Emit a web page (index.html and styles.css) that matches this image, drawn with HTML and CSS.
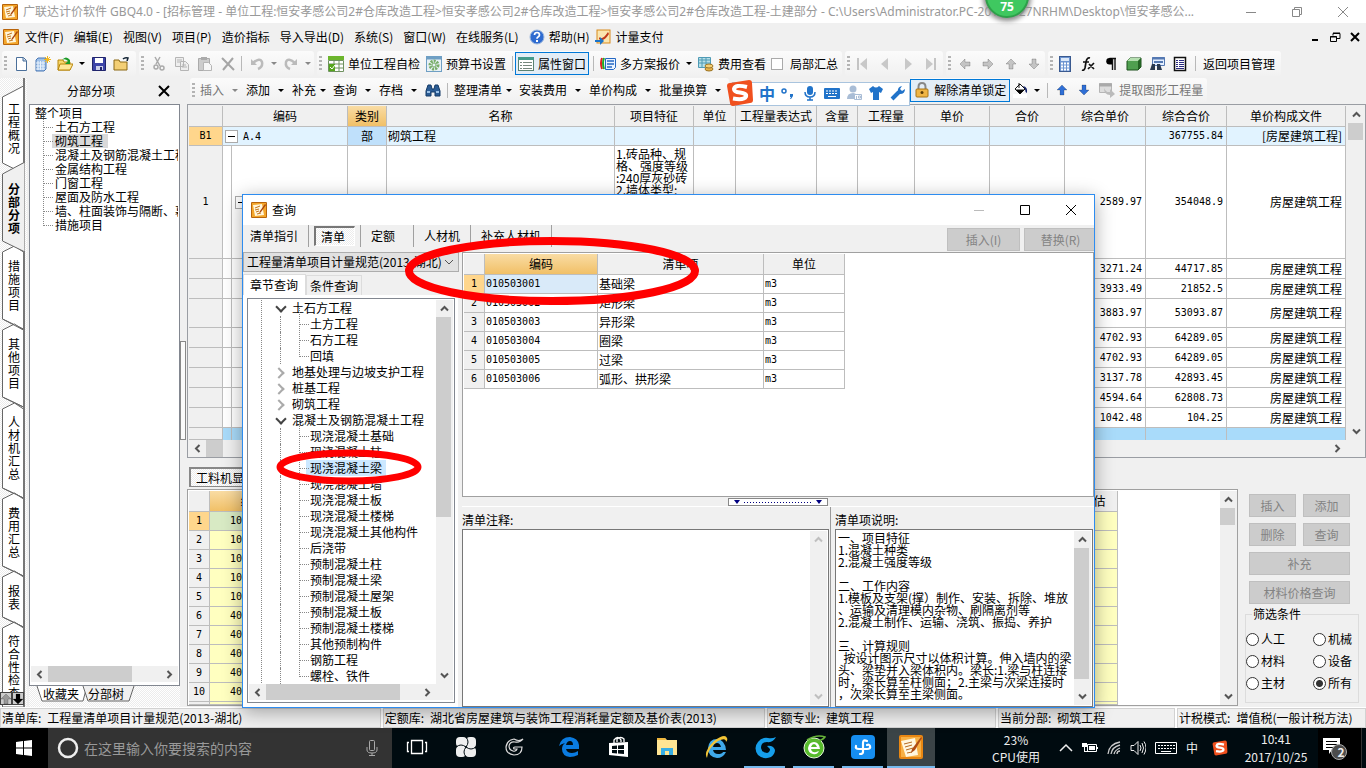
FILE: index.html
```html
<!DOCTYPE html>
<html lang="zh-CN">
<head>
<meta charset="utf-8">
<title>广联达计价软件 GBQ4.0</title>
<link rel="stylesheet" href="styles.css">
</head>
<body>
<svg width="0" height="0" class="defs" aria-hidden="true">
  <symbol id="logo" viewBox="0 0 16 16"><rect width="16" height="16" rx="1" fill="#b8640a"/><rect x="1" y="1" width="14" height="14" fill="#f3a62b"/><path d="M2 3l9-1 2 11-9 1z" fill="#fff6dc"/><path d="M4 6l5-2M4 8l4-1M5 10l3-1M6 12l4-1" stroke="#c2741a" fill="none"/><path d="M14 2L9 9l-1 2 2-1 5-7z" fill="#a8430c"/></symbol>
  <symbol id="up" viewBox="0 0 9 9"><path d="M1 6.500L4.500 3 8 6.500" fill="none" stroke="currentColor" stroke-width="2"/></symbol>
  <symbol id="down" viewBox="0 0 9 9"><path d="M1 2.500L4.500 6 8 2.500" fill="none" stroke="currentColor" stroke-width="2"/></symbol>
  <symbol id="left" viewBox="0 0 9 9"><path d="M6.500 1L3 4.500 6.500 8" fill="none" stroke="currentColor" stroke-width="2"/></symbol>
  <symbol id="right" viewBox="0 0 9 9"><path d="M2.500 1L6 4.500 2.500 8" fill="none" stroke="currentColor" stroke-width="2"/></symbol>
  <symbol id="arrow" viewBox="0 0 16 16"><path d="M8 3l5 5h-3v5H6V8H3z" fill="currentColor" stroke="#0003"/></symbol>
  <symbol id="sogou" viewBox="0 0 28 28"><path d="M4 4L23 1q3 0 3 3l1 17q0 3-3 3L7 27q-3 0-3-3L1 7q0-3 3-3z" fill="#f0501e"/><path d="M21 8q-12-3-13 2 0 3 6 3.500 7 1 6 4-2 4-13 2" fill="none" stroke="#fff" stroke-width="4"/></symbol>
</svg>

<header class="titlebar">
  <svg class="i16"><use href="#logo"/></svg>
  <h1>广联达计价软件 GBQ4.0 - [招标管理 - 单位工程:恒安孝感公司2#仓库改造工程&gt;恒安孝感公司2#仓库改造工程&gt;恒安孝感公司2#仓库改造工程-土建部分 - C:\Users\Administrator.PC-20141127NRHM\Desktop\恒安孝感公...</h1>
  <div class="winbtns">
    <button aria-label="最小化"><svg class="i12" viewBox="0 0 12 12"><path d="M1 6.500h10" stroke="#888"/></svg></button>
    <button aria-label="还原"><svg class="i12" viewBox="0 0 12 12"><path d="M1.500 3.500h7v7h-7zM3.500 3V1.500h7v7H9" fill="none" stroke="#888"/></svg></button>
    <button aria-label="关闭"><svg class="i12" viewBox="0 0 12 12"><path d="M1 1l10 10M11 1L1 11" stroke="#888"/></svg></button>
  </div>
</header>

<nav class="menubar">
  <svg class="i16"><use href="#logo"/></svg>
  <button>文件(F)</button><button>编辑(E)</button><button>视图(V)</button><button>项目(P)</button><button>造价指标</button><button>导入导出(D)</button><button>系统(S)</button><button>窗口(W)</button><button>在线服务(L)</button>
  <button class="ic"><svg class="i16" viewBox="0 0 16 16"><circle cx="8" cy="8" r="7" fill="#2e6bd0" stroke="#9db8dd"/><path d="M5.500 6q0-2.500 2.500-2.500T10.500 6q0 1-1.500 2-1 .6-1 1.700" stroke="#fff" stroke-width="1.700" fill="none"/><rect x="7" y="11" width="2" height="2" fill="#fff"/></svg>帮助(H)</button>
  <button class="ic"><svg class="i16" viewBox="0 0 16 16"><rect x="2" y="1" width="13" height="13" fill="#fbe6b0" stroke="#d88a1c"/><path d="M4 8q3 4 9-5l1 2q-6 9-10 5z" fill="#c03a1c"/><path d="M0 11h5V8l4 4-4 4v-3H0z" fill="#1b74c9"/></svg>计量支付</button>
  <span class="mdi">
    <svg class="i12" viewBox="0 0 12 12"><path d="M3 9h6" stroke="#000" stroke-width="2"/></svg>
    <svg class="i12" viewBox="0 0 12 12"><path d="M1.500 5.500h6v5h-6zM4 4.500V2.500h7v5H8M1 6h7M4 2h7" fill="none" stroke="#000"/></svg>
    <svg class="i12" viewBox="0 0 12 12"><path d="M2 2l8 8M10 2l-8 8" stroke="#000" stroke-width="2"/></svg>
  </span>
</nav>

<div class="toolbar">
  <div class="group g1">
    <i class="grip"></i>
    <button aria-label="新建"><svg class="i16" viewBox="0 0 16 16"><path d="M3.500 1.500h7l3 3v10h-10z" fill="#fff" stroke="#4a6f9a"/><path d="M10 2v3h3" fill="#bcd0e6" stroke="#4a6f9a"/></svg></button>
    <button aria-label="新建项目"><svg class="i16" viewBox="0 0 16 16"><path d="M1 4l2-2h8v11l-2 2H1z" fill="#9ec0e8" stroke="#4b78b5"/><path d="M3 5v9M5.500 5v9M8 5v9M1 7h9M1 10h9M1 13h9" stroke="#e9f2fb"/><path d="M12.500 0v7M9 3.500h7M10 1l5 5M15 1l-5 5" stroke="#f3b81d"/></svg></button>
    <button aria-label="打开"><svg class="i16" viewBox="0 0 16 16"><path d="M1 4h5l1 2h6v8H1z" fill="#f7d66c" stroke="#b8860b"/><path d="M3 8h13l-3 6H1z" fill="#ffe799" stroke="#b8860b"/><path d="M5 4q4-5 8 0V1v7H8l3-3q-3-3-6-1z" fill="#1c9b29"/></svg></button>
    <b class="dd"></b>
    <button aria-label="保存"><svg class="i16" viewBox="0 0 16 16"><path d="M1.500 1.500h13v13h-13z" fill="#3d45a8" stroke="#20246c"/><rect x="4" y="2" width="8" height="5" fill="#fff"/><rect x="5" y="10" width="7" height="4" fill="#cdd1ea"/><rect x="9" y="11" width="2" height="3" fill="#20246c"/></svg></button>
    <button aria-label="文件夹"><svg class="i16" viewBox="0 0 16 16"><path d="M1 4h5l1 2h7v8H1z" fill="#f3cf75" stroke="#8b6914"/><path d="M10 3q2-2 5-1l-1 3" stroke="#123" fill="none" stroke-width="1.500"/></svg></button>
  </div>
  <div class="group g2">
    <i class="grip"></i>
    <button aria-label="剪切" disabled><svg class="i16" viewBox="0 0 16 16"><path d="M4 1l5 9M9 1L5 8" stroke="#aaa" stroke-width="1.500"/><circle cx="5" cy="11" r="2" fill="none" stroke="#aaa" stroke-width="1.500"/><circle cx="11" cy="12" r="2" fill="none" stroke="#aaa" stroke-width="1.500"/></svg></button>
    <button aria-label="复制" disabled><svg class="i16" viewBox="0 0 16 16"><path d="M1.500 1.500h8v9h-8zM6.500 5.500h5l3 3v6h-8z" fill="#eee" stroke="#b5b5b5"/><path d="M8 9h4M8 11h5M3 4h5M3 6h3" stroke="#b5b5b5"/></svg></button>
    <button aria-label="粘贴" disabled><svg class="i16" viewBox="0 0 16 16"><path d="M1.500 2.500h11v12h-11z" fill="#ccc" stroke="#aaa"/><path d="M4 1h6v3H4z" fill="#aaa"/><path d="M6.500 6.500h5l3 3v5h-8z" fill="#f6f6f6" stroke="#b5b5b5"/></svg></button>
    <button aria-label="删除" disabled><svg class="i16" viewBox="0 0 16 16"><path d="M2 2l12 12M13 2L3 14" stroke="#a5a5a5" stroke-width="2"/></svg></button>
    <i class="sep"></i>
    <button aria-label="撤销" disabled><svg class="i16" viewBox="0 0 16 16"><path d="M4 7q7-6 9-1 1 5-4 7" stroke="#bbb" stroke-width="2.500" fill="none"/><path d="M2 3v6h6z" fill="#bbb"/></svg></button>
    <b class="dd off"></b>
    <button aria-label="重做" disabled><svg class="i16" viewBox="0 0 16 16"><path d="M12 7q-7-6-9-1-1 5 4 7" stroke="#bbb" stroke-width="2.500" fill="none"/><path d="M14 3v6H8z" fill="#bbb"/></svg></button>
    <b class="dd off"></b>
  </div>
  <div class="group g3">
    <i class="grip"></i>
    <button><svg class="i16" viewBox="0 0 16 16"><rect width="16" height="4" fill="#6cb52d"/><path d="M.5 4.500h15v11H.5zM0 8h16M0 12h16M6 4v12M11 4v12" fill="#fff" stroke="#6f9160"/><rect x="1" y="8" width="6" height="7" fill="#55a51c"/><path d="M2 11l2 2 3-4" stroke="#fff" fill="none"/></svg>单位工程自检</button>
    <button><svg class="i16" viewBox="0 0 16 16"><rect x=".5" y=".5" width="15" height="15" fill="#e8f1f6" stroke="#6f9fc4"/><path d="M0 2h16" stroke="#6f9fc4" stroke-width="3"/><circle cx="8" cy="9" r="4" fill="none" stroke="#78ad68" stroke-width="3" stroke-dasharray="2 1"/><circle cx="8" cy="9" r="2" fill="none" stroke="#78ad68"/></svg>预算书设置</button>
    <i class="sep"></i>
    <button class="pressed"><svg class="i16" viewBox="0 0 16 16"><rect x=".5" y="1.500" width="15" height="13" fill="#fff" stroke="#5a8272"/><rect y="1" width="16" height="3" fill="#459a8a"/><path d="M5 6.500h9M5 9.500h9M5 12.500h9M2 6.500h2M2 9.500h2M2 12.500h2" stroke="#75877d"/></svg>属性窗口</button>
    <i class="sep"></i>
    <button><svg class="i16" viewBox="0 0 16 16"><path d="M2 2q-2 5 0 11" stroke="#d22" stroke-width="2" fill="none"/><path d="M4 2q-2 5 0 11" stroke="#2a2" stroke-width="2" fill="none"/><path d="M5.500 2.500h10v9l-2 2h-8z" fill="#eaf3ff" stroke="#2468c4"/><path d="M7 5h7M7 8h7M7 11h5" stroke="#2468c4" stroke-width="1.500"/></svg>多方案报价</button>
    <b class="dd"></b>
    <button><svg class="i16" viewBox="0 0 16 16"><path d="M.5 1.500h12v10H.5zM0 4h13M0 7h13M4 1v10M8 1v10" fill="#b7e0e8" stroke="#4e9ab5"/><ellipse cx="11" cy="13" rx="4" ry="2" fill="#e6b24a" stroke="#9c7425"/><ellipse cx="11" cy="10" rx="4" ry="2" fill="#f3cf75" stroke="#9c7425"/></svg>费用查看</button>
    <label><input type="checkbox" class="check">局部汇总</label>
  </div>
  <div class="group nav4">
    <i class="grip"></i>
    <button aria-label="首条" disabled><svg class="i16" viewBox="0 0 16 16"><path d="M4 2v12" stroke="#c4c4c4" stroke-width="2"/><path d="M13 2v12L6 8z" fill="#c8c8c8"/></svg></button>
    <button aria-label="上一条" disabled><svg class="i16" viewBox="0 0 16 16"><path d="M11 2v12L4 8z" fill="#c8c8c8"/></svg></button>
    <button aria-label="下一条" disabled><svg class="i16" viewBox="0 0 16 16"><path d="M5 2v12l7-6z" fill="#c8c8c8"/></svg></button>
    <button aria-label="末条" disabled><svg class="i16" viewBox="0 0 16 16"><path d="M12 2v12" stroke="#c4c4c4" stroke-width="2"/><path d="M3 2v12l7-6z" fill="#c8c8c8"/></svg></button>
  </div>
  <div class="group nav5">
    <i class="grip"></i>
    <button aria-label="左移" disabled><svg class="i16 r270"><use href="#arrow"/></svg></button>
    <button aria-label="右移" disabled><svg class="i16 r90"><use href="#arrow"/></svg></button>
    <button aria-label="上移" disabled><svg class="i16"><use href="#arrow"/></svg></button>
    <button aria-label="下移" disabled><svg class="i16 r180"><use href="#arrow"/></svg></button>
  </div>
  <div class="group g6">
    <i class="grip"></i>
    <button aria-label="计算器"><svg class="i16" viewBox="0 0 16 16"><rect x="2.500" y=".5" width="11" height="15" fill="#6d94d0" stroke="#39598f"/><rect x="4" y="2" width="8" height="3" fill="#dbe8f8"/><path d="M4 7.500h8M4 10.500h8M4 13.500h8" stroke="#fff" stroke-width="2" stroke-dasharray="2 1"/></svg></button>
    <button aria-label="函数"><svg class="i16" viewBox="0 0 16 16"><path d="M10 2q-3-1-4 4L5 12q-1 3-3 2M3 6h6M9 8l5 5M14 7l-6 6" stroke="#111" stroke-width="1.700" fill="none"/></svg></button>
    <button aria-label="段落"><svg class="i16" viewBox="0 0 16 16"><path d="M13 2.500H6.500M9.500 2v12M12 2v12" fill="none" stroke="#111" stroke-width="1.400"/><path d="M9 2H6.500a3 3 0 000 6.500H9z"/></svg></button>
    <button aria-label="模型"><svg class="i16" viewBox="0 0 16 16"><path d="M1 5l3-3h11v9l-3 3H1z" fill="#4f9f4f" stroke="#1d501d"/><path d="M1 5l3-3h11l-3 3z" fill="#b5dfb0"/><path d="M12 5v9l3-3V2z" fill="#246324"/></svg></button>
    <button aria-label="查找清单"><svg class="i16" viewBox="0 0 16 16"><path d="M3.500 1.500h12v8h-12z" fill="#e4efff" stroke="#5579b2"/><path d="M3 2.500h13M5 6h9" stroke="#5579b2" stroke-width="2"/><path d="M1 14l2-6h3v6zM8 14V8h3l2 6z" fill="#29394f"/></svg></button>
    <button aria-label="报表"><svg class="i16" viewBox="0 0 16 16"><path d="M2.500 1.500h11v13h-11z" fill="#fff" stroke="#111" stroke-width="1.500"/><path d="M4 4.500h2M7 4.500h5M4 6.500h2M7 6.500h5M4 8.500h2M7 8.500h5M4 10.500h2M7 10.500h5M4 12.500h8" stroke="#2b2b80"/></svg></button>
    <i class="sep"></i>
    <button class="plain">返回项目管理</button>
  </div>
</div>

<div class="workspace">
  <nav class="vtabs">
    <svg class="vshape" viewBox="0 0 25 629" width="25" height="629" aria-hidden="true">
      <g fill="#fff" stroke="#666"><path d="M23.500 8L2.500 19v66l12 6 9-6z"/><path d="M2.500 241V174l12-6 9 6v77z"/><path d="M2.500 319V252l12-6 9 6v77z"/><path d="M2.500 410V331l12-6 9 6v89z"/><path d="M2.500 488V421l12-6 9 6v77z"/><path d="M2.500 539V499l12-6 9 6v50z"/><path d="M2.500 629V550l12-6 9 6v79z"/><path d="M2.500 241l21 11M2.500 319l21 10M2.500 410l21 10M2.500 488l21 10M2.500 539l21 10"/></g>
      <path d="M25 84L2.500 96v67L25 174z" fill="#f0f0f0" stroke="#666"/><path d="M24 0v85M24 174v455" stroke="#777" stroke-width="2"/>
    </svg>
    <button class="t1">工程概况</button><button class="t2 on">分部分项</button><button class="t3">措施项目</button><button class="t3">其他项目</button><button class="t5">人材机汇总</button><button class="t3">费用汇总</button><button class="t7">报表</button><button class="t8">符合性检查</button>
    <span class="vscroll"><button aria-label="上"><svg class="i12 gray" viewBox="2 2 12 12"><use href="#arrow" width="16" height="16"/></svg></button><button aria-label="下"><svg class="i12 r180" viewBox="2 2 12 12"><use href="#arrow" width="16" height="16"/></svg></button></span>
  </nav>

  <aside class="side">
    <div class="sidehead"><h2>分部分项</h2><button aria-label="关闭"><svg class="i12" viewBox="0 0 12 12"><path d="M1 1l10 10M11 1L1 11" stroke="#000" stroke-width="2"/></svg></button></div>
    <div class="treebox">
      <ul class="tree">
        <li class="root">整个项目</li>
        <li><span>土石方工程</span></li><li><span class="sel">砌筑工程</span></li><li><span>混凝土及钢筋混凝土工程</span></li><li><span>金属结构工程</span></li><li><span>门窗工程</span></li><li><span>屋面及防水工程</span></li><li><span>墙、柱面装饰与隔断、幕墙工程</span></li><li><span>措施项目</span></li>
      </ul>
      <div class="sbh"><svg class="i9"><use href="#left"/></svg><div class="track"><i class="th84"></i></div><svg class="i9"><use href="#right"/></svg></div>
    </div>
    <div class="sidetabs">
      <svg viewBox="0 0 104 17" width="104" height="17" aria-hidden="true"><path d="M1 0l5 15h41l4-15" fill="#fff" stroke="#666"/><path d="M47 0l5 15h41l5-15" fill="#f0f0f0" stroke="#666"/></svg>
      <button>收藏夹</button><button>分部树</button>
    </div>
  </aside>
  <div class="split"><i></i></div>

  <main class="main">
    <div class="toolbar second">
      <div class="group">
        <i class="grip"></i>
        <button class="dim">插入</button><b class="dd off wide"></b><button>添加</button><b class="dd wide"></b><button>补充</button><b class="dd slim"></b><button>查询</button><b class="dd wide"></b><button>存档</button><b class="dd wide"></b>
        <button aria-label="查找"><svg class="i16" viewBox="0 0 16 16"><path d="M1 14V9l2-6h3l1 4h2l1-4h3l2 6v5h-5v-4H6v4z" fill="#2b5c94" stroke="#153a66"/><path d="M2 10h3M11 10h3" stroke="#9cc2e8" stroke-width="2"/></svg></button>
        <i class="sep"></i>
        <button>整理清单</button><b class="dd slim"></b><button>安装费用</button><b class="dd wide"></b><button>单价构成</button><b class="dd wide"></b><button>批量换算</button><b class="dd wide"></b>
      </div>
      <div class="group after">
        <button class="pressed"><svg class="i16" viewBox="0 0 16 16"><path d="M4.500 8V5q0-4 3.500-4t3.500 4v3" fill="none" stroke="#888" stroke-width="2"/><rect x="2" y="7" width="12" height="8" rx="1" fill="#efb545" stroke="#a87416"/><circle cx="8" cy="10.500" r="1.500" fill="#5a3c08"/></svg>解除清单锁定</button>
        <button aria-label="填充"><svg class="i16" viewBox="0 0 16 16"><rect y="12" width="14" height="4" fill="#fff"/><path d="M2 7l5-5 5 5-5 5z" fill="#fff" stroke="#111"/><path d="M3 8h8l-4 4zM6 1v5" stroke="#111"/><path d="M10 4q5 1 4 7-2-1-2-4z" fill="#14246c"/></svg></button>
        <b class="dd"></b><i class="sep"></i>
        <button aria-label="上移" class="blue"><svg class="i16"><use href="#arrow"/></svg></button>
        <button aria-label="下移" class="blue"><svg class="i16 r180"><use href="#arrow"/></svg></button>
        <button class="dim"><svg class="i16" viewBox="0 0 16 16"><path d="M.5 1.500h12v9H.5z" fill="#ddd" stroke="#b5b5b5"/><path d="M0 3h13" stroke="#aaa" stroke-width="3"/><path d="M5 6q2 5 6 4V7l5 5-5 4v-3Q5 13 5 6z" fill="#bbb"/></svg>提取图形工程量</button>
      </div>
    </div>

    <div class="gridbox top">
      <table class="grid">
        <colgroup><col class="c34"><col class="c125"><col class="c39"><col><col class="c79"><col class="c42"><col class="c81"><col class="c41"><col class="c57"><col class="c75"><col class="c75"><col class="c81"><col class="c81"><col class="c119"></colgroup>
        <thead><tr class="h21"><th></th><th>编码</th><th class="hot">类别</th><th>名称</th><th>项目特征</th><th>单位</th><th>工程量表达式</th><th>含量</th><th>工程量</th><th>单价</th><th>合价</th><th>综合单价</th><th>综合合价</th><th>单价构成文件</th></tr></thead>
        <tbody>
          <tr class="h19 sec"><th class="act">B1</th><td class="n"><i class="box"></i>A.4</td><td class="kind">部</td><td>砌筑工程</td><td></td><td></td><td></td><td></td><td></td><td></td><td></td><td></td><td class="n r">367755.84</td><td class="r">[房屋建筑工程]</td></tr>
          <tr class="h113"><th class="n">1</th><td class="tl"><i class="box in"></i></td><td></td><td></td><td class="wrap">1.砖品种、规<br>格、强度等级<br>:240厚灰砂砖<br>2.墙体类型:</td><td></td><td></td><td></td><td></td><td></td><td></td><td class="n r">2589.97</td><td class="n r">354048.9</td><td class="r">房屋建筑工程</td></tr>
          <tr class="h20"><th></th><td class="tl"></td><td></td><td></td><td></td><td></td><td></td><td></td><td></td><td></td><td></td><td class="n r">3271.24</td><td class="n r">44717.85</td><td class="r">房屋建筑工程</td></tr>
          <tr class="h20"><th></th><td class="tl"></td><td></td><td></td><td></td><td></td><td></td><td></td><td></td><td></td><td></td><td class="n r">3933.49</td><td class="n r">21852.5</td><td class="r">房屋建筑工程</td></tr>
          <tr class="h29"><th></th><td class="tl"></td><td></td><td></td><td></td><td></td><td></td><td></td><td></td><td></td><td></td><td class="n r">3883.97</td><td class="n r">53093.87</td><td class="r">房屋建筑工程</td></tr>
          <tr class="h20"><th></th><td class="tl"></td><td></td><td></td><td></td><td></td><td></td><td></td><td></td><td></td><td></td><td class="n r">4702.93</td><td class="n r">64289.05</td><td class="r">房屋建筑工程</td></tr>
          <tr class="h20"><th></th><td class="tl"></td><td></td><td></td><td></td><td></td><td></td><td></td><td></td><td></td><td></td><td class="n r">4702.93</td><td class="n r">64289.05</td><td class="r">房屋建筑工程</td></tr>
          <tr class="h20"><th></th><td class="tl"></td><td></td><td></td><td></td><td></td><td></td><td></td><td></td><td></td><td></td><td class="n r">3137.78</td><td class="n r">42893.45</td><td class="r">房屋建筑工程</td></tr>
          <tr class="h20"><th></th><td class="tl"></td><td></td><td></td><td></td><td></td><td></td><td></td><td></td><td></td><td></td><td class="n r">4594.64</td><td class="n r">62808.73</td><td class="r">房屋建筑工程</td></tr>
          <tr class="h20"><th></th><td class="tl"></td><td></td><td></td><td></td><td></td><td></td><td></td><td></td><td></td><td></td><td class="n r">1042.48</td><td class="n r">104.25</td><td class="r">房屋建筑工程</td></tr>
          <tr class="h12 cur"><th></th><td class="tl"></td><td></td><td></td><td></td><td></td><td></td><td></td><td></td><td></td><td></td><td></td><td></td><td></td></tr>
        </tbody>
      </table>
      <div class="sbv"><svg class="i9"><use href="#up"/></svg><div class="track"><i class="th17"></i></div><svg class="i9"><use href="#down"/></svg></div>
      <div class="sbh"><svg class="i9"><use href="#left"/></svg><div class="track"><i class="th17w"></i></div><svg class="i9"><use href="#right"/></svg></div>
    </div>

    <div class="subtabs"><button>工料机显示</button></div>

    <div class="lower">
      <div class="gridbox bottom">
        <table class="grid yel">
          <colgroup><col class="c20"><col class="c86"><col><col class="c72"></colgroup>
          <thead><tr class="h21"><th></th><th class="hot">编码</th><th></th><th>是否暂估</th></tr></thead>
          <tbody class="n">
            <tr class="h19"><th class="act">1</th><td class="grn">10</td><td></td><td></td></tr>
            <tr class="h19"><th>2</th><td>10</td><td></td><td></td></tr><tr class="h19"><th>3</th><td>10</td><td></td><td></td></tr><tr class="h19"><th>4</th><td>10</td><td></td><td></td></tr><tr class="h19"><th>5</th><td>10</td><td></td><td></td></tr><tr class="h19"><th>6</th><td>40</td><td></td><td></td></tr><tr class="h19"><th>7</th><td>40</td><td></td><td></td></tr><tr class="h19"><th>8</th><td>40</td><td></td><td></td></tr><tr class="h19"><th>9</th><td>40</td><td></td><td></td></tr><tr class="h19"><th>10</th><td>40</td><td></td><td></td></tr><tr class="h2"><th></th><td></td><td></td><td></td></tr>
          </tbody>
        </table>
        <div class="blank"></div>
        <div class="sbv"><svg class="i9"><use href="#up"/></svg><div class="track"><i class="th17"></i></div><svg class="i9"><use href="#down"/></svg></div>
      </div>
      <section class="actions">
        <div class="btns"><button disabled>插入</button><button disabled>添加</button><button disabled>删除</button><button disabled>查询</button><button disabled class="full">补充</button><button disabled class="full">材料价格查询</button></div>
        <fieldset><legend>筛选条件</legend>
          <label><input type="radio" name="f">人工</label><label><input type="radio" name="f">机械</label>
          <label><input type="radio" name="f">材料</label><label><input type="radio" name="f">设备</label>
          <label><input type="radio" name="f">主材</label><label><input type="radio" name="f" checked>所有</label>
        </fieldset>
      </section>
    </div>
  </main>
</div>

<footer class="status"><span class="s1">清单库:&ensp;工程量清单项目计量规范(2013-湖北)</span><span class="s2">定额库:&ensp;湖北省房屋建筑与装饰工程消耗量定额及基价表(2013)</span><span class="s3">定额专业:&ensp;建筑工程</span><span class="s4">当前分部:&ensp;砌筑工程</span><span class="s5">计税模式:&ensp;增值税(一般计税方法)</span></footer>

<div class="taskbar">
  <button class="start" aria-label="开始"><svg class="i16" viewBox="0 0 16 16"><path d="M0 2l7-1v6.500H0zM8 1l8-1v7.500H8zM0 8.500h7V15l-7-1zM8 8.500h8V16l-8-1z" fill="#fff"/></svg></button>
  <label class="search"><svg class="i22" viewBox="0 0 22 22"><circle cx="11" cy="11" r="9" fill="none" stroke="#eee" stroke-width="2.500"/></svg><input type="text" placeholder="在这里输入你要搜索的内容" aria-label="搜索"><svg class="i16" viewBox="0 0 16 16"><rect x="5.500" y=".5" width="5" height="10" rx="1" fill="none" stroke="#aaa"/><path d="M3 7v3q0 3 5 3t5-3V7M8 13v3M5 15.500h6" fill="none" stroke="#aaa"/></svg></label>
  <div class="apps">
    <button aria-label="任务视图"><svg class="i22" viewBox="0 0 22 22"><path d="M5.500 4.500h11v13h-11zM3 6.500H1.500v9H3M19 6.500h1.500v9H19" fill="none" stroke="#fff" stroke-width="1.300"/></svg></button>
    <button aria-label="应用"><svg class="i22" viewBox="0 0 22 22"><g fill="#eee"><rect x="1" y="1" width="11" height="10" rx="4"/><rect x="11" y="1" width="10" height="11" rx="4"/><rect x="10" y="11" width="11" height="10" rx="4"/><rect x="1" y="10" width="10" height="11" rx="4"/></g><path d="M11 11Q6 7 1 11M11 11q4-5 0-10M11 11q5 4 10 0M11 11q-4 5 0 10" stroke="#000b10" fill="none"/></svg></button>
    <button aria-label="浏览器"><svg class="i22" viewBox="0 0 22 22"><path d="M19 3q-4 3-9 0-7 1-8 8 0 7 8 8 8 0 8-8h-7q-2 0-1 2h3q-1 3-4 2-4-1-4-5 1-5 6-4 5 1 8-3z" fill="none" stroke="#ddd" stroke-width="1.200"/></svg></button>
    <button class="edge" aria-label="Edge"><svg class="i22" viewBox="0 0 22 22"><path d="M1 10Q3 1 12 1q8 1 9 8v4H8q1 4 6 4 3 0 6-2v4q-4 2-8 2-8-1-8-8 0-4 3-6-4 1-6 3zm7-1h7q0-4-3-4t-4 4z" fill="#0a7be0"/></svg></button>
    <button aria-label="商店"><svg class="i22" viewBox="0 0 22 22"><path d="M2 7l19-1v15L2 19z" fill="#fff"/><path d="M7 7V4q4-5 7 0v2M10 6V3q4-3 7 0v3" stroke="#fff" fill="none" stroke-width="1.300"/><path d="M5 10l5-.5v3.500H5zM11 9.500l6-.5v4h-6zM5 14h5v3.500L5 17zM11 14h6v4l-6-.5z" fill="#000b10"/></svg></button>
    <button aria-label="资源管理器"><svg class="i22" viewBox="0 0 22 22"><path d="M1 2h8l2 2h10v15H1z" fill="#ffe594"/><path d="M1 2h8l1 2H1z" fill="#efb73e"/><path d="M5 19v-7h12v7h-4v-4H9v4z" fill="#37aee5"/></svg></button>
    <button aria-label="IE"><svg class="i24" viewBox="0 0 24 24"><path d="M4 13Q5 4 13 4q8 1 9 11H9q1 4 5 4 4 0 5-2h3q-3 6-9 6-9-1-9-10zm5-1h8q-1-4-4-4t-4 4z" fill="#3fa9ea"/><path d="M3 23Q-1 17 10 6 21-2 23 3q1 2-1 4 0-5-8-1Q4 13 3 23z" fill="#f2c436"/></svg></button>
    <button class="run" aria-label="浏览器"><svg class="i24" viewBox="0 0 24 24"><path d="M23 2q-3 6-9 5-6 0-6 6 1 5 6 5 3-1 3-4l-3-3q6-1 8 4 0 4-4 7-7 3-13-2-5-7 0-13 4-5 10-4 4 1 8-1z" fill="#159eea"/></svg></button>
    <button class="run" aria-label="安全浏览器"><svg class="i24" viewBox="0 0 24 24"><circle cx="12" cy="13" r="10" fill="#57bb2c" stroke="#e5f7d8"/><path d="M6 13q1-6 6-6t6 7H9q1 4 5 3l3-1q-2 4-6 3-5-1-5-6zm3-1h6q-1-3-3-3t-3 3z" fill="#fff"/><path d="M5 5q10-6 18-3-3 4-10 4" fill="none" stroke="#66b33a" stroke-width="1.500"/></svg></button>
    <button class="run" aria-label="云盘"><svg class="i24" viewBox="0 0 24 24"><rect width="24" height="24" rx="4" fill="#168ef0"/><path d="M16 6q-4-2-4 2v9q0 2-3 2M5 11q-1 3 3 3h8q4 0 3-3-1-2-3-1" stroke="#fff" stroke-width="2.200" fill="none" stroke-linecap="round"/></svg></button>
    <button class="run on" aria-label="广联达"><svg class="i24" viewBox="0 0 24 24"><rect width="24" height="24" rx="2" fill="#e98712"/><rect x="2" y="2" width="20" height="20" fill="#f7b044"/><path d="M2 6l14-3 3 17-12 2z" fill="#fff7df"/><path d="M5 9l8-2M6 12l7-2M7 15l7-2M8 18l5-1" stroke="#b66b22"/><path d="M22 2l-9 12-1 4 4-3 7-12z" fill="#b04c12"/></svg></button>
  </div>
  <div class="cpu">23%<br>CPU使用</div>
  <div class="tray">
    <svg class="i16" viewBox="0 0 16 16"><path d="M2 11l6-6 6 6" fill="none" stroke="#eee" stroke-width="1.500"/></svg>
    <svg class="i16" viewBox="0 0 16 16"><path d="M5.500 4.500h9v7h-9z" fill="none" stroke="#fff"/><path d="M7 6h6v4H7zM15 7h1v2h-1zM0 3h5v4H0zM2 7h1v4h3v1H2z" fill="#fff"/></svg>
    <svg class="i16" viewBox="0 0 16 16"><path d="M2 14Q3 4 14 2M5 14q1-7 9-9M8 14q1-4 6-6M11 14q0-3 3-3" fill="none" stroke="#ccc" stroke-width="1.300"/></svg>
    <svg class="i16" viewBox="0 0 16 16"><path d="M1 5.500h3l4-4v13l-4-4H1zM10 5q2 3 0 6M12 3q3 5 0 10M14 1.500q4 6 0 13" fill="none" stroke="#eee"/></svg>
    <svg class="i24" viewBox="0 0 24 24"><path d="M1.500 6.500h21v11h-21z" fill="none" stroke="#fff"/><path d="M4 9.500h17M4 12.500h17" stroke="#fff" stroke-dasharray="2 1"/><path d="M7 15.500h10" stroke="#fff"/></svg>
    <span>中</span>
    <svg class="i16"><use href="#sogou"/></svg>
  </div>
  <div class="clock">10:41<br>2017/10/25</div>
  <button class="note" aria-label="通知"><svg class="i24" viewBox="0 0 24 24"><path d="M0 2h17v12H9l-3 4v-4H0z" fill="#fff"/><path d="M3 5.500h11M3 8.500h11M3 11.500h7" stroke="#000"/><circle cx="16" cy="16" r="7.500" fill="#4c4c4c" stroke="#aaa"/></svg><b>2</b></button>
</div>

<section class="dialog" role="dialog" aria-label="查询">
  <div class="dtitle"><svg class="i16"><use href="#logo"/></svg><h2>查询</h2>
    <button aria-label="最小化"><svg class="i12" viewBox="0 0 12 12"><path d="M1 6.500h10" stroke="#bbb"/></svg></button>
    <button aria-label="最大化"><svg class="i12" viewBox="0 0 12 12"><path d="M1.500 1.500h9v9h-9z" fill="none" stroke="#000"/></svg></button>
    <button aria-label="关闭"><svg class="i12" viewBox="0 0 12 12"><path d="M1 1l10 10M11 1L1 11" stroke="#000"/></svg></button>
  </div>
  <div class="dtabs"><button>清单指引</button><button class="on">清单</button><button class="w">定额</button><button>人材机</button><button>补充人材机</button><span class="dact"><button disabled>插入(I)</button><button disabled>替换(R)</button></span></div>
  <div class="dbody">
    <div class="dleft">
      <div class="combo"><select aria-label="清单规范"><option>工程量清单项目计量规范(2013-湖北)</option></select><svg class="i12" viewBox="0 0 12 12"><path d="M2 4l4 4 4-4" fill="none" stroke="#555"/></svg></div>
      <div class="ptabs"><button class="on">章节查询</button><button>条件查询</button></div>
      <div class="page"><div class="dtree">
        <ul class="nodes">
          <li class="p open">土石方工程</li><li>土方工程</li><li>石方工程</li><li class="last">回填</li>
          <li class="p">地基处理与边坡支护工程</li><li class="p">桩基工程</li><li class="p">砌筑工程</li>
          <li class="p open">混凝土及钢筋混凝土工程</li><li>现浇混凝土基础</li><li>现浇混凝土柱</li><li><mark>现浇混凝土梁</mark></li><li>现浇混凝土墙</li><li>现浇混凝土板</li><li>现浇混凝土楼梯</li><li>现浇混凝土其他构件</li><li>后浇带</li><li>预制混凝土柱</li><li>预制混凝土梁</li><li>预制混凝土屋架</li><li>预制混凝土板</li><li>预制混凝土楼梯</li><li>其他预制构件</li><li>钢筋工程</li><li class="last">螺栓、铁件</li>
        </ul>
        <div class="sbv"><svg class="i9"><use href="#up"/></svg><div class="track"><i class="th200"></i></div><svg class="i9"><use href="#down"/></svg></div>
        <div class="sbh"><svg class="i9"><use href="#left"/></svg><div class="track"><i class="th134"></i></div><svg class="i9"><use href="#right"/></svg></div>
      </div></div>
    </div>
    <div class="dright">
      <div class="dgrid">
        <table class="grid small">
          <colgroup><col class="c21"><col class="c113"><col class="c166"><col class="c81"></colgroup>
          <thead><tr class="h21"><th></th><th class="hot">编码</th><th>清单项</th><th>单位</th></tr></thead>
          <tbody>
            <tr class="h19"><th class="act n">1</th><td class="n pick">010503001</td><td>基础梁</td><td class="n">m3</td></tr>
            <tr class="h19"><th class="n">2</th><td class="n">010503002</td><td>矩形梁</td><td class="n">m3</td></tr>
            <tr class="h19"><th class="n">3</th><td class="n">010503003</td><td>异形梁</td><td class="n">m3</td></tr>
            <tr class="h19"><th class="n">4</th><td class="n">010503004</td><td>圈梁</td><td class="n">m3</td></tr>
            <tr class="h19"><th class="n">5</th><td class="n">010503005</td><td>过梁</td><td class="n">m3</td></tr>
            <tr class="h19"><th class="n">6</th><td class="n">010503006</td><td>弧形、拱形梁</td><td class="n">m3</td></tr>
          </tbody>
        </table>
      </div>
      <div class="hsplit"><span><svg viewBox="0 0 98 6" width="98" height="6"><path d="M5 1h6L8 5zM87 1h6l-3 4z" fill="#000080"/><path d="M15 3.500h68" stroke="#000080" stroke-dasharray="1 2"/></svg></span></div>
      <div class="notes">
        <div class="note1"><label for="n1">清单注释:</label><div class="ta"><textarea id="n1"></textarea><div class="sbv dis"><svg class="i9"><use href="#up"/></svg><div class="track"></div><svg class="i9"><use href="#down"/></svg></div></div></div>
        <div class="note2"><label for="n2">清单项说明:</label><div class="ta"><textarea id="n2" wrap="off">一、项目特征
1.混凝土种类
2.混凝土强度等级

二、工作内容
1.模板及支架(撑）制作、安装、拆除、堆放
、运输及清理模内杂物、刷隔离剂等
2.混凝土制作、运输、浇筑、振捣、养护

三、计算规则
  按设计图示尺寸以体积计算。伸入墙内的梁
头、梁垫并入梁体积内。梁长:1.梁与柱连接
时，梁长算至柱侧面；2.主梁与次梁连接时
，次梁长算至主梁侧面。</textarea><div class="sbv"><svg class="i9"><use href="#up"/></svg><div class="track"><i class="th131"></i></div><svg class="i9"><use href="#down"/></svg></div></div></div>
      </div>
    </div>
  </div>
</section>

<div class="ime">
  <svg class="i28"><use href="#sogou"/></svg><b>中</b>
  <svg class="i16" viewBox="0 0 16 16"><circle cx="4" cy="6" r="2" fill="none" stroke="#2173c9" stroke-width="1.500"/><path d="M10 9h3v2l-2 3h-1l1-2h-1z" fill="#2173c9"/></svg>
  <svg class="i16" viewBox="0 0 16 16"><rect x="5" y="1" width="6" height="9" rx="3" fill="#2173c9"/><path d="M3 7q0 5 5 5t5-5M8 12v3M5 15h6" fill="none" stroke="#2173c9" stroke-width="1.500"/></svg>
  <svg class="i16" viewBox="0 0 16 16"><rect y="3" width="16" height="11" rx="1" fill="#2173c9"/><path d="M2 6h12M2 8.500h12" stroke="#fff" stroke-dasharray="2 1"/><path d="M4 11.500h8" stroke="#fff"/></svg>
  <svg class="i16" viewBox="0 0 16 16"><circle cx="7" cy="4" r="3.500" fill="#a9bdd6"/><path d="M1 14q0-6 6-6 3 0 4 3v3z" fill="#a9bdd6"/><path d="M8.500 9.500h7v5h-7z" fill="#fff" stroke="#a9bdd6"/><path d="M10.500 11v3M12.500 11h2v2h-2z" stroke="#a9bdd6" fill="none"/></svg>
  <svg class="i16" viewBox="0 0 16 16"><path d="M1 4l4-3q3 3 6 0l4 3-2 4-2-1v8H5V7L3 8z" fill="#2173c9"/></svg>
  <svg class="i16" viewBox="0 0 16 16"><path d="M2 14L9 7" stroke="#2173c9" stroke-width="4"/><path d="M14 2l-3 3M8 7q-1-5 4-6L10 4l2 2 3-2q0 5-5 5z" fill="#2173c9"/></svg>
</div>
<div class="ball">75</div>
<svg class="ring ring1" viewBox="0 0 298 70" width="298" height="70" aria-hidden="true"><ellipse cx="149" cy="35" rx="143" ry="30" fill="none" stroke="#f00" stroke-width="8"/></svg>
<svg class="ring ring2" viewBox="0 0 148 38" width="148" height="38" aria-hidden="true"><ellipse cx="74" cy="19" rx="69" ry="14" fill="none" stroke="#f00" stroke-width="7"/></svg>
</body>
</html>
```
FILE: styles.css
```css
* { box-sizing: border-box; }
body { margin: 0; height: 100vh; overflow: hidden; display: flex; flex-direction: column; background: #f0f0f0; color: #000; font: 12px/14px "Noto Sans CJK SC", sans-serif; position: relative; }
button, input, select, textarea { font: inherit; color: inherit; margin: 0; padding: 0; border: 0; background: none; border-radius: 0; }
button { white-space: nowrap; display: inline-flex; align-items: center; justify-content: center; }
h1, h2, ul { margin: 0; padding: 0; font: inherit; list-style: none; }
svg { flex: none; display: block; }
.defs { position: absolute; }
.i9 { width: 9px; height: 9px; }
.i12 { width: 12px; height: 12px; }
.i16 { width: 16px; height: 16px; }
.i22 { width: 22px; height: 22px; }
.i24 { width: 24px; height: 24px; }
.i28 { width: 28px; height: 28px; }
.r90 { transform: rotate(90deg); }
.r180 { transform: rotate(180deg); }
.r270 { transform: rotate(270deg); }

.titlebar { height: 23px; background: #fff; color: #999; display: flex; align-items: center; padding-left: 2px; gap: 5px; flex: none; }
.titlebar h1 { flex: 0 1 auto; min-width: 0; overflow: hidden; text-overflow: ellipsis; white-space: nowrap; font-family: "Noto Sans", "Noto Sans CJK SC", sans-serif; line-height: 20px; }
.winbtns { display: flex; margin-left: auto; }
.winbtns button { width: 46px; height: 22px; }
.menubar { height: 28px; display: flex; align-items: center; padding-left: 3px; gap: 10px; flex: none; }
.menubar .i16 + button { margin-left: -4px; }
.menubar .ic { gap: 4px; }
.menubar .ic + .ic { margin-left: -4px; }
.mdi { margin-left: auto; display: flex; gap: 8px; padding-right: 5px; }

.toolbar { display: flex; gap: 3px; height: 27px; padding: 0 0 0 2px; flex: none; align-items: flex-start; }
.group { height: 25px; display: flex; align-items: center; background: linear-gradient(#fbfbfb, #f1f1f1); border-radius: 3px; padding-left: 2px; gap: 7px; }
.group button, .group label { gap: 4px; display: inline-flex; align-items: center; white-space: nowrap; }
.grip { width: 3px; height: 15px; background: repeating-linear-gradient(#b4b4b4 0 2px, transparent 2px 4px); }
.sep { width: 1px; height: 15px; background: #b8b8b8; }
.dd { width: 8px; display: flex; justify-content: center; }
.dd::before { content: ""; border: 3px solid transparent; border-top-color: #000; border-bottom: 0; }
.dd.off::before { border-top-color: #888; }
.g1 { width: 134px; gap: 6px; }
.g1 .dd { width: 6px; }
.g2 { width: 175px; gap: 7px; }
.g2 .dd { width: 4px; }
.g2 .sep { margin-left: -2px; }
.g3 { width: 525px; gap: 6px; }
.g3 .sep { margin-right: -4px; }
.g3 .pressed { margin-right: -2px; }
.g3 .pressed + .sep { margin-right: 0; }
.g3 .dd { margin: 0 -1px; }
.g3 label { gap: 7px; margin-left: -1px; }
.pressed { border: 1px solid #0078d7; background: #e3edf6; height: 23px; padding: 0 3px; }
.g3 .pressed { padding: 0 2px; }
.check { appearance: none; width: 12px; height: 12px; border: 1px solid #aaa; background: #fff; }
.nav4 { width: 98px; }
.nav5 { width: 99px; color: #c4c4c4; }
.nav4 .grip { margin-right: -3px; }
.nav5 .grip { margin-right: -1px; }
.g6 { width: 233px; }
.g6 .grip { margin-right: -3px; }

.workspace { flex: 1; min-height: 0; display: flex; }
.vtabs { width: 27px; flex: none; position: relative; display: flex; flex-direction: column; padding-top: 8px; overflow: hidden; background: repeating-conic-gradient(#fff 0 25%, #ececec 0 50%) 0 0 / 2px 2px; }
.vshape { position: absolute; left: 0; top: 0; }
.vtabs > button { width: 14px; margin-left: 7px; white-space: normal; line-height: 13px; position: relative; flex: none; }
.vtabs .on { font-weight: bold; }
.t1 { height: 83px; }
.t2 { height: 77px; }
.t3 { height: 78px; }
.t5 { height: 91px; }
.t7 { height: 51px; }
.vtabs .t8 { height: 85px; align-items: flex-start; padding-top: 12px; }
.vscroll { position: absolute; left: 0; bottom: 2px; display: flex; }
.vscroll button { width: 12px; height: 13px; background: #ccc; border: 1px solid #444; }
.vscroll .gray { color: #999; }
.side { width: 153px; flex: none; display: flex; flex-direction: column; padding-left: 2px; }
.sidehead { height: 26px; display: flex; align-items: center; justify-content: flex-end; gap: 43px; padding-right: 10px; flex: none; }
.treebox { border: 1px solid #828790; background: #fff; flex: 1; display: flex; flex-direction: column; justify-content: space-between; padding: 1px 1px 3px; min-height: 0; }
.tree { overflow: hidden; padding-left: 4px; }
.tree li { height: 14px; line-height: 14px; white-space: nowrap; padding-left: 17px; position: relative; }
.tree .root { padding-left: 0; }
.tree li:not(.root)::before { content: ""; position: absolute; left: 8px; top: -7px; width: 9px; height: 14px; border: dotted #888; border-width: 0 0 1px 1px; }
.tree span { padding: 0 3px; display: inline-block; }
.tree .sel { background: #d9d9d9; padding-right: 5px; }
.sidetabs { height: 21px; flex: none; position: relative; display: flex; padding-left: 14px; gap: 9px; align-items: flex-start; background: repeating-conic-gradient(#fff 0 25%, #ececec 0 50%) 0 0 / 2px 2px; }
.sidetabs svg { position: absolute; left: 7px; top: 0; }
.sidetabs button { position: relative; height: 16px; }
.split { width: 7px; flex: none; display: flex; align-items: center; }
.split i { width: 6px; height: 99px; border: 1px solid #888; margin-bottom: 4px; background: #fafafa; }

.sbh, .sbv { background: #f0f0f0; color: #555; display: flex; align-items: center; }
.sbh { height: 16px; padding: 0 4px; gap: 4px; flex: none; }
.sbv { width: 17px; flex-direction: column; padding: 4px 0; gap: 4px; }
.track { flex: 1; align-self: stretch; display: flex; }
.sbv .track { flex-direction: column; }
.track i { background: #cdcdcd; display: block; }
.sbv .track i { margin-right: 2px; }
.sbv.dis { color: #bfbfbf; }
.th84 { width: 84px; }
.th17 { height: 17px; }
.th17w { width: 17px; }
.th200 { height: 200px; }
.th134 { width: 134px; }
.th131 { height: 131px; }

.main { flex: 1; min-width: 0; display: flex; flex-direction: column; }
.second { height: 26px; padding-left: 3px; gap: 0; }
.second .group { height: 24px; gap: 0; }
.second .grip { margin-right: 5px; }
.second .dd.wide { width: 22px; }
.second .dd.slim { width: 17px; padding-right: 4px; }
.second .sep { margin: 0 6px; }
.second .dim { color: #777; }
.second .after { margin-left: 181px; padding: 0; }
.after .pressed { margin-right: 3px; }
.after .dd { width: 16px; }
.second .after .sep { margin: 0 3px 0 2px; }
.after .blue { color: #2f6fd6; width: 22px; }
.after .dim { margin-left: 4px; padding-right: 4px; }

.gridbox { border: 1px solid #a0a0a0; display: grid; background: #f0f0f0; padding: 1px 0 0 1px; }
.top { grid-template-columns: minmax(0, 1fr) 19px; border-color: #9a9da3; }
.top .sbv { margin-left: 2px; }
.top .sbh { grid-column: 1 / 2; height: 17px; }
.grid { border-collapse: separate; border-spacing: 0; table-layout: fixed; width: 100%; line-height: 12px; white-space: nowrap; background: #fff; }
.grid th { background: #f0f0f0; font-weight: normal; text-align: center; }
.grid th, .grid td { border: solid #bdbdbd; border-width: 0 1px 1px 0; padding: 0 1px; overflow: hidden; }
.grid td.r { text-align: right; padding-right: 3px; }
.grid th.hot { background: linear-gradient(#f9dca4, #f1c067); }
.grid th.act { background: #ffd68c; }
.n, .grid .act { font-family: "DejaVu Sans Mono", monospace; font-size: 10px; }
.c20, .c21 { width: 21px; } .c34 { width: 34px; } .c39 { width: 39px; } .c41 { width: 41px; } .c42 { width: 42px; } .c57 { width: 57px; } .c72 { width: 72px; } .c75 { width: 75px; } .c79 { width: 79px; } .c81 { width: 81px; } .c86 { width: 86px; } .c113 { width: 113px; } .c119 { width: 119px; } .c125 { width: 125px; } .c166 { width: 166px; }
.h2 { height: 3px; } .h12 { height: 12px; } .h19 { height: 19px; } .h20 { height: 20px; } .h21 { height: 21px; } .h29 { height: 29px; } .h113 { height: 113px; }
.sec td { background: #e1f3ff; }
.grid .kind { background: #bfe0fb; text-align: center; }
.box { display: inline-block; width: 13px; height: 13px; border: 1px solid #aaa; background: linear-gradient(#000, #000) center / 7px 1px no-repeat #fff; vertical-align: middle; margin: 0 5px 0 1px; }
.box.in { margin-left: 11px; }
.grid .tl { background: linear-gradient(#bdbdbd, #bdbdbd) 8px 0 / 1px 100% no-repeat; }
.grid .wrap { vertical-align: top; padding-top: 2px; }
.cur td, .grid .cur .tl { background-color: #a9dbfa; }
.cur td { border-bottom: 0; }
.subtabs { height: 31px; padding: 9px 0 2px 2px; flex: none; display: flex; }
.subtabs button { border: 1px solid #888; border-width: 2px 1px 1px 2px; padding: 0 7px 0 5px; background: repeating-conic-gradient(#fff 0 25%, #ececec 0 50%) 0 0 / 2px 2px; }
.lower { flex: 1; min-height: 0; display: flex; gap: 7px; }
.bottom { flex: 1; grid-template-columns: minmax(0, 1fr) 102px 17px; background: #fff; overflow: hidden; margin-bottom: 1px; }
.yel td { background: #ffffc0; }
.yel tbody td:nth-child(2) { padding-left: 20px; }
.yel td.grn { background: #d8eac4; }
.actions { width: 121px; flex: none; padding: 5px 7px 4px 0; display: flex; flex-direction: column; }
.btns { display: grid; grid-template-columns: 47px 47px; gap: 6px 7px; margin-left: 4px; }
.btns button, .dact button { height: 23px; background: #ccc; border: 1px solid #bfbfbf; color: #838383; }
.full { grid-column: 1 / 3; }
.actions fieldset { margin: 3px 0 0; padding: 11px 0 12px; border: 1px solid #dcdcdc; display: grid; grid-template-columns: 67px 1fr; gap: 8px 0; min-width: 0; }
.actions legend { padding: 0 1px; margin-left: 6px; }
.actions label { display: flex; align-items: center; gap: 2px; white-space: nowrap; }
.actions input { appearance: none; width: 13px; height: 13px; border: 1px solid #333; border-radius: 50%; background: #fff; flex: none; }
.actions input:checked { background: radial-gradient(#333 0 3px, #fff 4px); }

.status { height: 21px; display: flex; gap: 2px; flex: none; background: #fff; padding-top: 1px; }
.status span { background: #f0f0f0; border: 1px solid #d2d2d2; line-height: 18px; padding-left: 1px; white-space: nowrap; overflow: hidden; flex-basis: 0; }
.s1 { flex-grow: 382; } .s2 { flex-grow: 383; } .s3 { flex-grow: 229; } .s4 { flex-grow: 176; } .s5 { flex-grow: 188; }

.taskbar { height: 40px; background: #000b10; color: #eee; display: flex; flex: none; align-items: stretch; }
.start { width: 48px; background: #000; }
.search { width: 344px; background: #333; display: flex; align-items: center; padding: 0 12px 0 9px; gap: 5px; }
.search input { flex: 1; min-width: 0; font-size: 14px; line-height: 20px; outline: 0; }
.search input::placeholder { color: #999; }
.apps { display: flex; }
.apps button { width: 49px; border-bottom: 2px solid transparent; }
.apps .edge { width: 54px; padding-left: 5px; }
.apps .run { border-color: #76b9ed; width: 41px; margin: 0 4px; }
.apps .on { background: #3b4447; width: 48px; margin: 0; }
.cpu { margin-left: auto; width: 84px; text-align: center; line-height: 17px; padding-top: 3px; }
.tray { display: flex; align-items: center; gap: 8px; width: 176px; }
.tray span + svg { margin-left: 6px; }
.clock { width: 84px; text-align: center; line-height: 18px; padding-top: 2px; }
.taskbar .note { width: 44px; background: #000; position: relative; border-right: 1px solid #333; margin-right: 4px; padding-right: 10px; }
.note b { position: absolute; left: 14px; top: 17px; width: 18px; font-size: 12px; }

.dialog { position: absolute; left: 242px; top: 194px; width: 853px; height: 514px; border: 1px solid #2d8cf0; background: #f0f0f0; display: flex; flex-direction: column; box-shadow: 0 4px 18px #0005; }
.dtitle { height: 30px; background: #fff; display: flex; align-items: center; padding-left: 8px; flex: none; }
.dtitle h2 { margin: 0 auto 0 5px; }
.dtitle button { width: 46px; height: 28px; }
.dtabs { height: 27px; display: flex; align-items: flex-start; flex: none; overflow: hidden; }
.dtabs > button { height: 22px; padding: 0 10px; border-right: 1px solid #a0a0a0; flex: none; }
.dtabs > button:first-child { padding-left: 7px; }
.dtabs > .on { margin: 1px 5px; height: 20px; padding: 0 9px 0 5px; border: 1px solid #777; border-width: 2px 1px 1px 2px; border-right-color: #fff; border-bottom-color: #fff; background: repeating-conic-gradient(#fff 0 25%, #ececec 0 50%) 0 0 / 2px 2px; }
.dtabs > .on + button { border-left: 1px solid #a0a0a0; }
.dtabs > .w { padding-right: 18px; }
.dact { margin: 0 -3px 0 auto; display: flex; gap: 4px; padding-top: 3px; }
.dact button { width: 73px; }
.dbody { flex: 1; display: flex; min-height: 0; }
.dleft { width: 219px; display: flex; flex-direction: column; flex: none; }
.combo { height: 20px; border: 1px solid #adadad; background: #e1e1e1; width: 216px; display: flex; align-items: center; padding: 0 3px; }
.combo select { appearance: none; flex: 1; min-width: 0; line-height: 16px; }
.ptabs { display: flex; align-items: flex-end; height: 23px; }
.ptabs button { border: 1px solid #dcdcdc; border-bottom: 0; height: 20px; padding: 0 3px; }
.ptabs .on { background: #fff; height: 21px; padding: 0 7px 0 6px; }
.page { flex: 1; background: #fff; width: 215px; padding: 3px 3px 4px 4px; min-height: 0; display: flex; }
.dtree { border: 1px solid #828790; display: grid; grid-template-columns: 1fr 17px; grid-template-rows: 1fr 17px; flex: 1; padding: 1px; }
.dtree .sbh { grid-column: 1 / 3; padding-right: 21px; }
.nodes { overflow: hidden; background: repeating-linear-gradient(#888 0 1px, transparent 1px 2px) 12px 0 / 1px 100% no-repeat; }
.nodes li { height: 16px; line-height: 16px; white-space: nowrap; padding-left: 61px; position: relative; }
.nodes li:not(.p)::before { content: ""; position: absolute; left: 50px; top: -8px; width: 9px; height: 16px; border: dotted #888; border-width: 0 0 1px 1px; }
.nodes li:not(.p)::after { content: ""; position: absolute; left: 31px; top: 0; height: 16px; border-left: 1px dotted #888; }
.nodes .p { padding-left: 43px; }
.nodes .p::before { content: ""; position: absolute; left: 26px; top: 5px; width: 6px; height: 6px; border: solid #aaa; border-width: 2px 2px 0 0; transform: rotate(45deg); }
.nodes .open::before { border-color: #444; transform: rotate(135deg); left: 28px; top: 3px; }
.nodes mark { background: #cce8ff; color: inherit; display: inline-block; margin-left: -4px; padding: 0 4px; }
.dright { flex: 1; min-width: 0; display: flex; flex-direction: column; }
.dgrid { height: 245px; border: 1px solid #a0a0a0; background: #fff; padding: 1px; }
.small { width: 381px; }
.grid .pick { background: #d9eaf9; }
.hsplit { height: 9px; display: flex; justify-content: center; align-items: center; }
.hsplit span { border: 1px solid #888; height: 8px; background: #fff; }
.notes { flex: 1; display: flex; min-height: 0; gap: 4px; border-top: 1px solid #fff; }
.notes > div { display: flex; flex-direction: column; }
.notes label { padding: 6px 0 0; height: 22px; }
.note1 { flex: 1; border-right: 1px solid #999; }
.note2 { width: 259px; }
.ta { flex: 1; border: 1px solid #777; background: #fff; display: flex; padding: 1px; margin-right: 1px; }
.ta textarea { flex: 1; min-width: 0; resize: none; line-height: 12px; padding: 1px 0 0 1px; overflow: hidden; outline: 0; background: #fff; }

.ime { position: absolute; z-index: 1; left: 726px; top: 79px; height: 28px; width: 184px; display: flex; align-items: center; gap: 6px; color: #2173c9; }
.ime::before { content: ""; position: absolute; z-index: -1; left: 6px; right: 0; top: 3px; bottom: 1px; background: #fff; border: 1px solid #a9c4de; }
.ime b { font-size: 16px; line-height: 20px; margin: 0 -1px; }
.ball { position: absolute; left: 985px; top: -26px; width: 44px; height: 44px; border-radius: 50%; background: #3fc860; border: 2px solid #2ea04a; box-shadow: 0 1px 5px 2px #888; color: #fff; font: bold 12px/14px "Open Sans", sans-serif; text-align: center; padding-top: 24px; }
.ring { position: absolute; pointer-events: none; }
.ring1 { left: 403px; top: 236px; }
.ring2 { left: 275px; top: 448px; }
```
